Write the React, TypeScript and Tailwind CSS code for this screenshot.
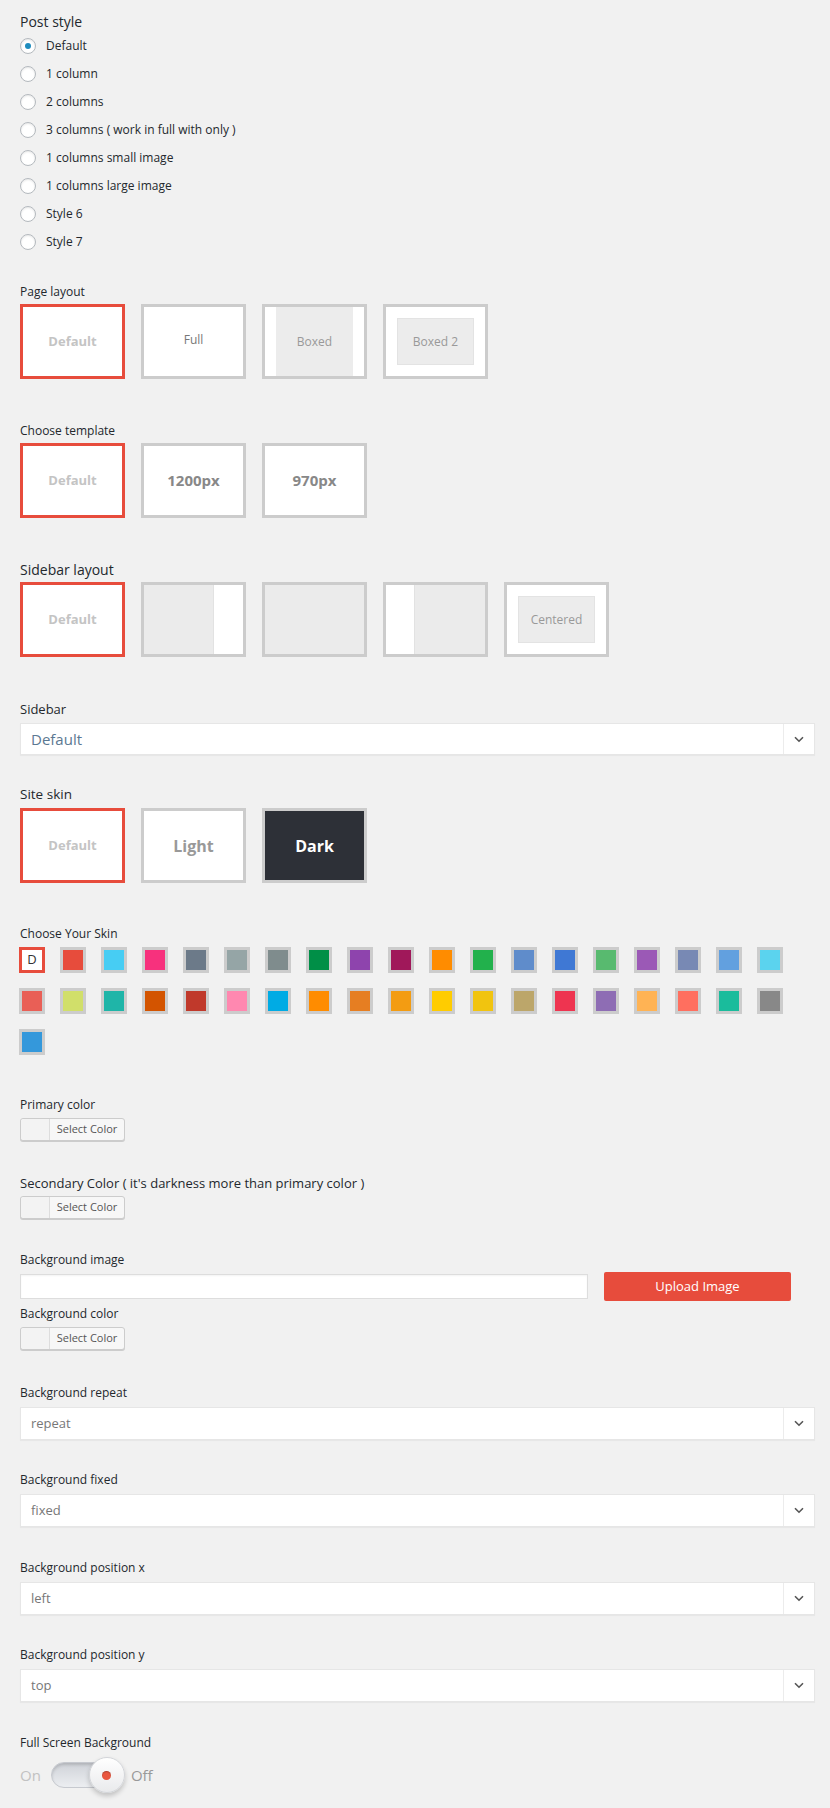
import { ReactNode } from 'react';

const font = { fontFamily: '"Open Sans", "Noto Sans", Arial, sans-serif' };

const postStyles = [
  'Default',
  '1 column',
  '2 columns',
  '3 columns ( work in full with only )',
  '1 columns small image',
  '1 columns large image',
  'Style 6',
  'Style 7',
];

const skins = [
  '#e74c3c', '#47cdf3', '#f7317d', '#6c7a89', '#95a5a6', '#7f8c8d', '#008f47', '#8e44ad', '#a0185a',
  '#ff8c00', '#22b14c', '#5f8ccb', '#3f78d4', '#58ba6f', '#9b59b6', '#7889b4', '#62a0df', '#5bd3ee',
  '#e95f56', '#d1df6a', '#1fb5a8', '#d35400', '#c0392b', '#ff88b0', '#00abe4', '#ff8c00', '#e67e22',
  '#f39c12', '#ffcc00', '#f1c40f', '#bca66a', '#ee3450', '#8e6db4', '#ffb354', '#ff6f5f', '#1abc9c',
  '#888888', '#3498db',
];

function Label({ children, size = 'text-[12px]' }: { children: ReactNode; size?: string }) {
  return <div className={`${size} leading-[20px] text-[#23282d]`}>{children}</div>;
}

function Tile({ active, dark, children }: { active?: boolean; dark?: boolean; children?: ReactNode }) {
  return (
    <div
      className={`w-[105px] h-[75px] border-[3px] flex overflow-hidden ${
        active ? 'border-[#e74c3c] bg-white' : dark ? 'border-[#cccccc] bg-[#2d3037]' : 'border-[#cccccc] bg-white'
      }`}
    >
      {children}
    </div>
  );
}

function Center({ children, className = '' }: { children: ReactNode; className?: string }) {
  return <div className={`flex-1 flex items-center justify-center ${className}`}>{children}</div>;
}

function DefaultText() {
  return <Center className="text-[13px] font-bold text-[#c4c4c4]">Default</Center>;
}

function Chevron() {
  return (
    <div className="w-[31px] border-l border-[#ececec] flex items-center justify-center">
      <svg width="10" height="7" viewBox="0 0 10 7" fill="none">
        <path d="M1 1.2L5 5.2L9 1.2" stroke="#555" strokeWidth="1.6" />
      </svg>
    </div>
  );
}

function Select({ value, big }: { value: string; big?: boolean }) {
  return (
    <div
      className={`mt-[4px] flex bg-white border border-[#e6e6e6] shadow-[0_1px_1px_rgba(0,0,0,0.04)] ${
        big ? 'h-[32px]' : 'h-[33px]'
      }`}
    >
      <div
        className={`flex-1 flex items-center pl-[10px] ${
          big ? 'text-[15px] text-[#5b7892]' : 'text-[13px] text-[#777]'
        }`}
      >
        {value}
      </div>
      <Chevron />
    </div>
  );
}

function ColorButton() {
  return (
    <div className="mt-[3px] flex w-[105px] h-[23px] rounded-[3px] border border-[#cccccc] bg-[#f7f7f7] shadow-[0_1px_0_#cccccc]">
      <div className="w-[29px] border-r border-[#dddddd] bg-[#f3f3f3] rounded-l-[3px]" />
      <div className="flex-1 flex items-center justify-center text-[11px] text-[#555]">Select Color</div>
    </div>
  );
}

export default function App() {
  return (
    <div className="w-[830px] min-h-[1808px] bg-[#f1f1f1] pl-[20px] pr-[15px] pt-[12px]" style={font}>
      {/* Post style */}
      <Label size="text-[14px]">Post style</Label>
      <div className="flex flex-col">
        {postStyles.map((s, i) => (
          <div key={s} className="h-[28px] flex items-center">
            <div className="w-[16px] h-[16px] rounded-full border border-[#b4b9be] bg-white shadow-[inset_0_1px_2px_rgba(0,0,0,0.1)] flex items-center justify-center">
              {i === 0 && <div className="w-[6px] h-[6px] rounded-full bg-[#1e8cbe]" />}
            </div>
            <span className="ml-[10px] text-[12px] text-[#23282d]">{s}</span>
          </div>
        ))}
      </div>

      {/* Page layout */}
      <div className="mt-[26px]">
        <Label>Page layout</Label>
        <div className="mt-[2px] flex gap-[16px]">
          <Tile active>
            <DefaultText />
          </Tile>
          <Tile>
            <Center className="text-[12px] text-[#777] pb-[3px]">Full</Center>
          </Tile>
          <Tile>
            <div className="flex-1 mx-[11px] bg-[#ececec] flex items-center justify-center text-[12px] text-[#999]">
              Boxed
            </div>
          </Tile>
          <Tile>
            <div className="flex-1 m-[11px] bg-[#ececec] border border-[#e3e3e3] flex items-center justify-center text-[12px] text-[#999]">
              Boxed 2
            </div>
          </Tile>
        </div>
      </div>

      {/* Choose template */}
      <div className="mt-[42px]">
        <Label>Choose template</Label>
        <div className="mt-[2px] flex gap-[16px]">
          <Tile active>
            <DefaultText />
          </Tile>
          <Tile>
            <Center className="text-[15px] font-bold text-[#888]">1200px</Center>
          </Tile>
          <Tile>
            <Center className="text-[15px] font-bold text-[#888]">970px</Center>
          </Tile>
        </div>
      </div>

      {/* Sidebar layout */}
      <div className="mt-[42px]">
        <Label size="text-[14px]">Sidebar layout</Label>
        <div className="mt-[2px] flex gap-[16px]">
          <Tile active>
            <DefaultText />
          </Tile>
          <Tile>
            <div className="flex-1 bg-[#ebebeb]" />
            <div className="w-[30px] bg-white border-l border-[#e2e2e2]" />
          </Tile>
          <Tile>
            <div className="flex-1 bg-[#ebebeb]" />
          </Tile>
          <Tile>
            <div className="w-[29px] bg-white border-r border-[#e2e2e2]" />
            <div className="flex-1 bg-[#ebebeb]" />
          </Tile>
          <Tile>
            <div className="flex-1 m-[11px] bg-[#ececec] border border-[#e3e3e3] flex items-center justify-center text-[12px] text-[#999]">
              Centered
            </div>
          </Tile>
        </div>
      </div>

      {/* Sidebar */}
      <div className="mt-[42px]">
        <Label size="text-[13px]">Sidebar</Label>
        <Select value="Default" big />
      </div>

      {/* Site skin */}
      <div className="mt-[29px]">
        <Label size="text-[13.5px]">Site skin</Label>
        <div className="mt-[4px] flex gap-[16px]">
          <Tile active>
            <DefaultText />
          </Tile>
          <Tile>
            <Center className="text-[16px] font-bold text-[#999]">Light</Center>
          </Tile>
          <Tile dark>
            <Center className="text-[16px] font-bold text-white">Dark</Center>
          </Tile>
        </div>
      </div>

      {/* Choose Your Skin */}
      <div className="mt-[41px]">
        <Label>Choose Your Skin</Label>
        <div className="mt-[3px] flex flex-wrap gap-[15px] -ml-[1px]">
          <div className="w-[26px] h-[26px] border-[3px] border-[#e74c3c] bg-white flex items-center justify-center text-[13px] text-[#333]">
            D
          </div>
          {skins.map((c, i) => (
            <div key={i} className="w-[26px] h-[26px] border-[3px] border-[#cccccc] bg-[#cccccc]">
              <div className="w-full h-full" style={{ backgroundColor: c }} />
            </div>
          ))}
        </div>
      </div>

      {/* Primary color */}
      <div className="mt-[40px]">
        <Label>Primary color</Label>
        <ColorButton />
      </div>

      <div className="mt-[32px]">
        <Label size="text-[13px]">Secondary Color ( it's darkness more than primary color )</Label>
        <ColorButton />
      </div>

      {/* Background image */}
      <div className="mt-[31px]">
        <Label>Background image</Label>
        <div className="mt-[2px] flex items-center">
          <div className="w-[568px] h-[25px] bg-white border border-[#dddddd] shadow-[inset_0_1px_2px_rgba(0,0,0,0.05)]" />
          <div className="ml-[16px] w-[187px] h-[29px] bg-[#e74c3c] rounded-[2px] flex items-center justify-center text-[13px] text-white">
            Upload Image
          </div>
        </div>
      </div>

      <div className="mt-[3px]">
        <Label>Background color</Label>
        <ColorButton />
      </div>

      <div className="mt-[33px]">
        <Label>Background repeat</Label>
        <Select value="repeat" />
      </div>

      <div className="mt-[30px]">
        <Label>Background fixed</Label>
        <Select value="fixed" />
      </div>

      <div className="mt-[31px]">
        <Label>Background position x</Label>
        <Select value="left" />
      </div>

      <div className="mt-[30px]">
        <Label>Background position y</Label>
        <Select value="top" />
      </div>

      {/* Full Screen Background */}
      <div className="mt-[31px]">
        <Label>Full Screen Background</Label>
        <div className="mt-[3px] flex items-center h-[38px]">
          <span className="text-[15px] text-[#c2c2c2]">On</span>
          <div className="relative ml-[10px] w-[74px] h-[38px]">
            <div className="absolute left-0 right-[4px] top-[6px] h-[26px] rounded-full border border-[#c6c9cf] bg-gradient-to-b from-[#cfd2d8] to-[#eceef1] shadow-[inset_0_2px_3px_rgba(0,0,0,0.15)]" />
            <div className="absolute right-0 top-[1px] w-[36px] h-[36px] rounded-full bg-gradient-to-b from-white to-[#e9eaec] border border-[#d3d5d9] shadow-[0_3px_5px_rgba(0,0,0,0.2)] flex items-center justify-center">
              <div className="w-[9px] h-[9px] rounded-full bg-[#e9573f] shadow-[inset_0_1px_1px_rgba(0,0,0,0.25)]" />
            </div>
          </div>
          <span className="ml-[6px] text-[15px] text-[#999]">Off</span>
        </div>
      </div>
    </div>
  );
}
